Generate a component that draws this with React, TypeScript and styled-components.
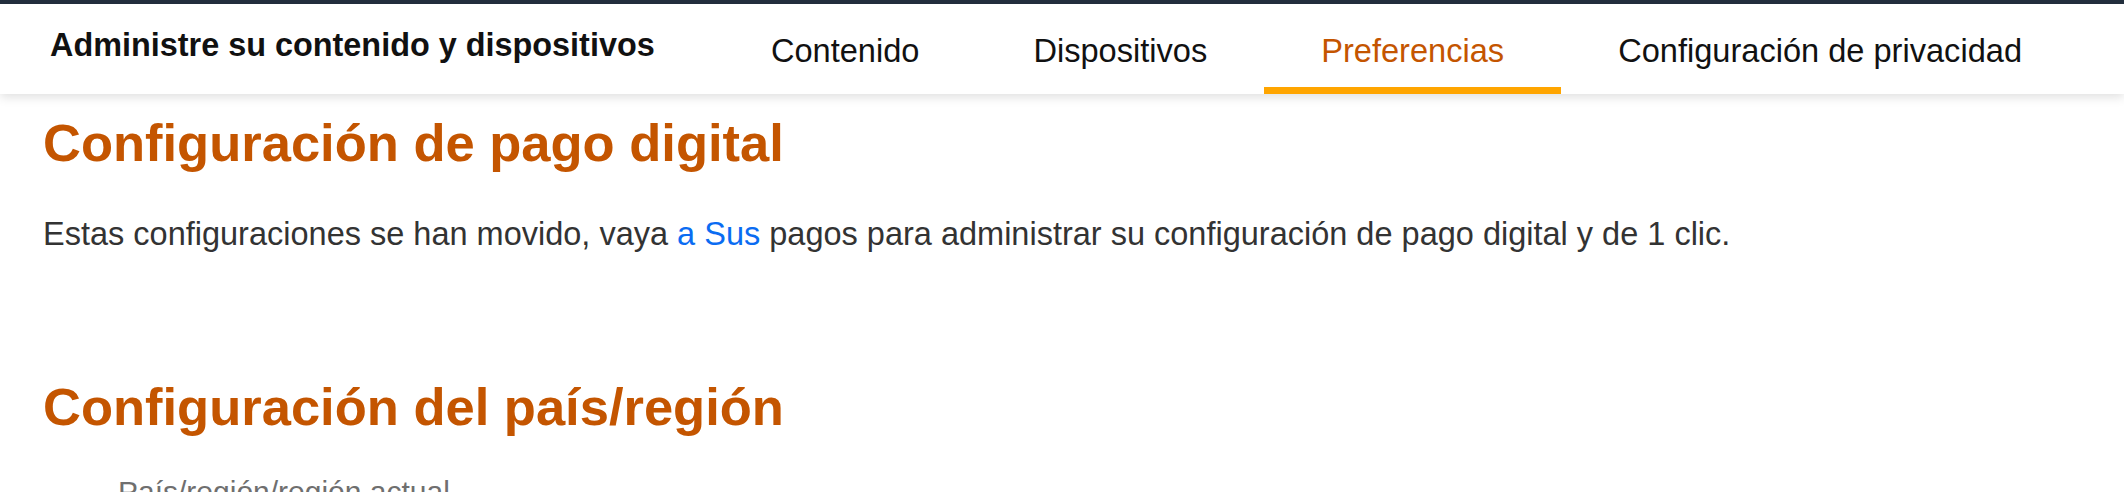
import styled, { createGlobalStyle } from 'styled-components'

const GlobalStyle = createGlobalStyle`
    html, body {
        margin: 0;
        padding: 0;
        background: #ffffff;
        font-family: "Liberation Sans", Arial, sans-serif;
    }
`

const TopStrip = styled.div`
    height: 4px;
    background: #232f3e;
`

const Header = styled.header`
    display: flex;
    align-items: flex-start;
    height: 90px;
    padding: 0 45px 0 50px;
    background: #ffffff;
    box-shadow: 0 3px 10px rgba(0, 0, 0, 0.13);
`

const HeaderTitle = styled.h1`
    margin: 23px 0 0;
    font-size: 32.4px;
    line-height: 36px;
    font-weight: bold;
    color: #111111;
    white-space: nowrap;
`

const Nav = styled.nav`
    display: flex;
    margin-left: auto;
    height: 100%;
`

const Tab = styled.a<{ $active?: boolean }>`
    display: flex;
    align-items: flex-start;
    box-sizing: border-box;
    height: 100%;
    padding: 29px 57px 0;
    font-size: 32.6px;
    line-height: 36px;
    color: ${(props) => (props.$active ? '#c45500' : '#111111')};
    border-bottom: 7px solid ${(props) => (props.$active ? '#ffa500' : 'transparent')};
    text-decoration: none;
    white-space: nowrap;
    cursor: pointer;
`

const Content = styled.main`
    padding: 0 43px;
`

const SectionTitle = styled.h2<{ $gap: number }>`
    margin: ${(props) => props.$gap}px 0 0;
    font-size: 52.5px;
    line-height: 60px;
    font-weight: bold;
    color: #c45500;
`

const Message = styled.p`
    margin: 41px 0 0;
    font-size: 32.5px;
    line-height: 40px;
    color: #333333;
`

const MessageLink = styled.a`
    color: #0a6cf2;
    text-decoration: none;
`

const FieldLabel = styled.p`
    margin: 37px 0 0 75px;
    font-size: 30px;
    line-height: 36px;
    color: #6f6f6f;
`

const tabs = ['Contenido', 'Dispositivos', 'Preferencias', 'Configuración de privacidad']

const App = () => {
    return (
        <>
            <GlobalStyle />
            <TopStrip />
            <Header>
                <HeaderTitle>Administre su contenido y dispositivos</HeaderTitle>
                <Nav>
                    {tabs.map((tab) => (
                        <Tab key={tab} $active={tab === 'Preferencias'}>
                            {tab}
                        </Tab>
                    ))}
                </Nav>
            </Header>
            <Content>
                <SectionTitle $gap={19}>Configuración de pago digital</SectionTitle>
                <Message>
                    Estas configuraciones se han movido, vaya <MessageLink>a Sus</MessageLink> pagos
                    para administrar su configuración de pago digital y de 1 clic.
                </Message>
                <SectionTitle $gap={123}>Configuración del país/región</SectionTitle>
                <FieldLabel>País/región/región actual</FieldLabel>
            </Content>
        </>
    )
}

export default App
